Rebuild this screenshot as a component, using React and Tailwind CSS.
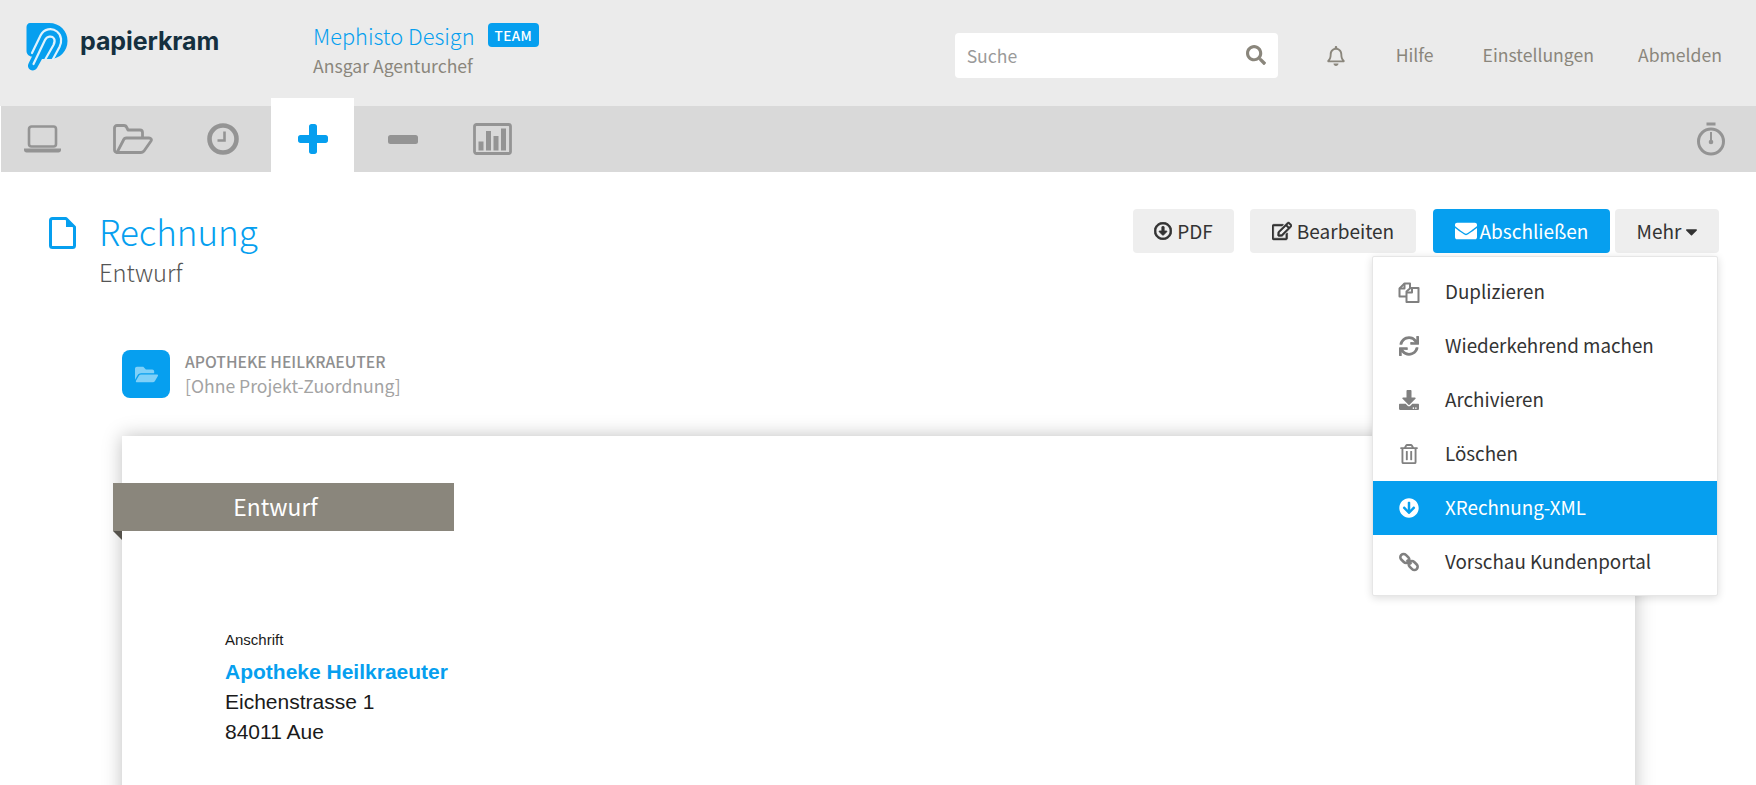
import React from "react";
import {
  FaRegBell, FaSearch, FaRegArrowAltCircleDown, FaRegEdit, FaEnvelope, FaCaretDown,
  FaSync, FaDownload, FaRegTrashAlt, FaArrowCircleDown, FaFolderOpen,
} from "react-icons/fa";

const Logo = () => (
  <svg width="42" height="48" viewBox="0 0 42 48" className="shrink-0">
    <path d="M4 0H23C34 0 41.500 8 41.500 18C41.500 28 34 36 24 36H16L11 45C9 48.500 4 48 2.500 45C1.500 43 2 41.500 3 39.500L6 33.500C3 33.500 .5 31 .5 28V4C.5 2 2 0 4 0Z" fill="#069fef" />
    <path d="M7.500 41L19 17C21 13 26 12.500 28 15.500C29.500 18 28.500 20 27.500 22L19.500 36" fill="none" stroke="#dff2fd" strokeWidth="2.200" strokeLinecap="round" />
    <path d="M6 30L14.500 12.500C18 5.500 26 4.500 31 8.500C36 12.500 36 19 33.500 24L27 36" fill="none" stroke="#dff2fd" strokeWidth="2.200" strokeLinecap="round" />
  </svg>
);

const Laptop = () => (
  <svg width="39" height="28" viewBox="0 0 39 28" fill="none">
    <rect x="6" y="1.500" width="27" height="20" rx="2.500" stroke="#949494" strokeWidth="2.600" />
    <path d="M1 23.500H38V25C38 26.500 37 27.500 35.500 27.500H3.500C2 27.500 1 26.500 1 25Z" fill="#949494" />
  </svg>
);

const FolderOpen = () => (
  <svg width="40" height="30" viewBox="0 0 40 30" fill="none" stroke="#949494" strokeWidth="2.800" strokeLinejoin="round">
    <path d="M4 28.500C2.500 28.500 1.500 27.500 1.500 26V4C1.500 2.500 2.500 1.500 4 1.500H11C12.500 1.500 13.500 2.500 14 4L15 6H27C28.500 6 29.500 7 29.500 8.500V13" />
    <path d="M4 28.500L10.500 16C11 14.500 12 14 13.500 14H36C38 14 39 15.500 38 17L31 27C30 28 29.500 28.500 28 28.500Z" />
  </svg>
);

const Clock = () => (
  <svg width="32" height="32" viewBox="0 0 32 32" fill="none">
    <circle cx="16" cy="16" r="13.500" stroke="#949494" strokeWidth="4.600" />
    <path d="M17.500 8.500V17.500H10.500" stroke="#949494" strokeWidth="2.600" />
  </svg>
);

const Chart = () => (
  <svg width="39" height="32" viewBox="0 0 39 32" fill="none">
    <rect x="1.500" y="1.500" width="36" height="29" rx="2" stroke="#949494" strokeWidth="2.800" />
    <rect x="5.500" y="18.500" width="5" height="9" fill="#949494" />
    <rect x="13" y="8" width="5" height="19.500" fill="#949494" />
    <rect x="20.500" y="13" width="5" height="14.500" fill="#949494" />
    <rect x="28" y="5.500" width="5" height="22" fill="#949494" />
  </svg>
);

const Stopwatch = () => (
  <svg width="30" height="34" viewBox="0 0 30 34" fill="none">
    <rect x="10.500" y="0.500" width="9" height="3" fill="#949494" />
    <circle cx="15" cy="19.500" r="12.500" stroke="#949494" strokeWidth="3" />
    <path d="M15 10V20" stroke="#949494" strokeWidth="2" />
    <circle cx="15" cy="20" r="2.300" fill="#949494" />
  </svg>
);

const Plus = () => (
  <svg width="30" height="30" viewBox="0 0 30 30">
    <path d="M11 2.500C11 1 12 0 13.500 0H16.500C18 0 19 1 19 2.500V11H27.500C29 11 30 12 30 13.500V16.500C30 18 29 19 27.500 19H19V27.500C19 29 18 30 16.500 30H13.500C12 30 11 29 11 27.500V19H2.500C1 19 0 18 0 16.500V13.500C0 12 1 11 2.500 11H11Z" fill="#069fef" />
  </svg>
);

const Minus = () => (
  <svg width="30" height="9" viewBox="0 0 30 9">
    <rect width="30" height="9" rx="2.500" fill="#949494" />
  </svg>
);

const FileOutline = () => (
  <svg width="27" height="32" viewBox="0 0 27 32" fill="none" className="mt-[8px] shrink-0">
    <path d="M3.500 1.500H17L25.500 10V28.500C25.500 29.800 24.800 30.500 23.500 30.500H3.500C2.200 30.500 1.500 29.800 1.500 28.500V3.500C1.500 2.200 2.200 1.500 3.500 1.500Z" stroke="#069fef" strokeWidth="3" strokeLinejoin="round" />
    <path d="M17 1.500V10H25.500Z" fill="#069fef" />
  </svg>
);

const Files = ({ className }) => (
  <svg viewBox="0 0 22 21" width="22" height="21" fill="none" stroke="currentColor" strokeWidth="2" strokeLinejoin="round" className={className}>
    <path d="M8 14.500H1.500V6.500L6.500 1.500H12V6" />
    <path d="M6.500 1.500V6.500H1.500" />
    <path d="M8.500 20V9.500L12.500 6H20.500V20Z" />
    <path d="M14 6V10.500H8.500" />
  </svg>
);

const Chain = ({ className }) => (
  <svg viewBox="0 0 20 20" width="20" height="20" fill="none" stroke="currentColor" strokeWidth="2.600" className={className}>
    <rect x="0.800" y="3.200" width="10" height="6.500" rx="3.200" transform="rotate(45 5.800 6.500)" />
    <rect x="9.200" y="10.300" width="10" height="6.500" rx="3.200" transform="rotate(45 14.200 13.500)" />
    <path d="M7.500 8L12.500 12" />
  </svg>
);

const menu = [
  { label: "Duplizieren", Icon: Files },
  { label: "Wiederkehrend machen", Icon: FaSync },
  { label: "Archivieren", Icon: FaDownload },
  { label: "Löschen", Icon: FaRegTrashAlt },
  { label: "XRechnung-XML", Icon: FaArrowCircleDown, active: true },
  { label: "Vorschau Kundenportal", Icon: Chain },
];

export default function App() {
  return (
    <div className="relative h-[785px] w-[1756px] overflow-hidden bg-white font-['Noto_Sans_CJK_SC','Noto_Sans',sans-serif] text-[#333]">
      {/* header */}
      <header className="flex h-[106px] items-center bg-[#ebebeb]">
        <div className="ml-[26px] flex w-[287px] items-center gap-[12px] self-start pt-[23px]">
          <Logo />
          <span className="-mt-[11px] font-['Inter',sans-serif] text-[25px] font-bold leading-none tracking-[-0.1px] text-[#15303f]">papierkram</span>
        </div>
        <div className="flex flex-col self-start pt-[21px]">
          <div className="flex items-start gap-[13px]">
            <span className="text-[21.800px] leading-[30px] font-light text-[#069fef]">Mephisto Design</span>
            <span className="mt-[2px] rounded-[4px] bg-[#069fef] px-[7px] text-[13.500px] leading-[24px] font-medium tracking-[0.4px] text-white">TEAM</span>
          </div>
          <span className="mt-[3px] text-[17.600px] leading-[24px] text-[#8a867c]">Ansgar Agenturchef</span>
        </div>
        <div className="ml-auto flex items-center pt-[5px]">
          <div className="relative h-[45px] w-[323px] rounded-[4px] bg-white">
            <input placeholder="Suche" className="h-full w-full bg-transparent pl-[12px] pr-[40px] text-[17.600px] outline-none placeholder:text-[#9a9a9a]" />
            <FaSearch className="absolute right-[12px] top-[12px] text-[20px] text-[#8a867c]" />
          </div>
          <FaRegBell className="ml-[48px] text-[20px] text-[#8a867c]" />
          <span className="ml-[50px] text-[17.600px] text-[#8a867c]">Hilfe</span>
          <span className="ml-[49px] text-[17.600px] text-[#8a867c]">Einstellungen</span>
          <span className="ml-[44px] mr-[34px] text-[17.600px] text-[#8a867c]">Abmelden</span>
        </div>
      </header>

      {/* tab bar */}
      <nav className="flex h-[66px] items-center gap-[7px] border-l border-white bg-[#d9d9d9]">
        <div className="flex h-[66px] w-[83px] items-center justify-center"><Laptop /></div>
        <div className="flex h-[66px] w-[83px] items-center justify-center"><FolderOpen /></div>
        <div className="flex h-[66px] w-[83px] items-center justify-center"><Clock /></div>
        <div className="-mt-[8px] flex h-[74px] w-[83px] items-center justify-center bg-white pt-[8px]"><Plus /></div>
        <div className="flex h-[66px] w-[83px] items-center justify-center"><Minus /></div>
        <div className="flex h-[66px] w-[83px] items-center justify-center"><Chart /></div>
        <div className="ml-auto mr-[30px] flex items-center"><Stopwatch /></div>
      </nav>

      {/* title row */}
      <div className="flex items-start justify-between pt-[37px] pr-[37px] pl-[49px]">
        <div className="flex items-start gap-[23px]">
          <FileOutline />
          <div className="flex flex-col">
            <h1 className="text-[35px] leading-[44px] font-light text-[#069fef]">Rechnung</h1>
            <span className="mt-[3px] text-[23.700px] leading-[32px] font-light text-[#555]">Entwurf</span>
          </div>
        </div>
        <div className="flex items-center">
          <button className="flex h-[44px] w-[101px] items-center justify-center gap-[5px] rounded-[4px] bg-[#eeeeee] text-[19px] text-[#333]"><FaRegArrowAltCircleDown stroke="currentColor" strokeWidth={24} className="text-[18px]" />PDF</button>
          <button className="ml-[16px] flex h-[44px] w-[166px] items-center justify-center gap-[5px] rounded-[4px] bg-[#eeeeee] text-[19px] text-[#333]"><FaRegEdit stroke="currentColor" strokeWidth={16} className="text-[20px]" />Bearbeiten</button>
          <button className="ml-[17px] flex h-[44px] w-[177px] items-center justify-center gap-[3px] rounded-[4px] bg-[#069fef] text-[19px] text-white"><FaEnvelope className="text-[22px]" />Abschließen</button>
          <button className="ml-[5px] flex h-[44px] w-[104px] items-center justify-center gap-[1px] rounded-[4px] bg-[#eeeeee] pl-[4px] text-[19px] text-[#333]">Mehr<FaCaretDown className="text-[19px]" /></button>
        </div>
      </div>

      {/* project line */}
      <div className="mt-[62px] ml-[122px] flex items-center gap-[15px]">
        <div className="flex h-[48px] w-[48px] items-center justify-center rounded-[8px] bg-[#069fef]">
          <FaFolderOpen className="text-[23px] text-[#7fd0f8]" />
        </div>
        <div className="flex flex-col">
          <span className="text-[15.700px] leading-[24px] font-medium text-[#8f8f8f]">APOTHEKE HEILKRAEUTER</span>
          <span className="text-[17.600px] leading-[24px] text-[#a3a3a3]">[Ohne Projekt-Zuordnung]</span>
        </div>
      </div>

      {/* paper */}
      <div className="mt-[38px] ml-[122px] h-[400px] w-[1513px] bg-white pt-[47px] shadow-[0_0_18px_rgba(0,0,0,0.25)]">
        <div className="relative -ml-[9px] flex h-[48px] w-[341px] items-center justify-center bg-[#8a867c] pr-[16px] text-[22.800px] text-white">
          Entwurf
          <svg width="9" height="9" viewBox="0 0 9 9" className="absolute top-[48px] left-0"><path d="M0 0H9V9Z" fill="#55524b" /></svg>
        </div>
        <div className="mt-[100px] ml-[103px] font-['Liberation_Sans',sans-serif] text-[21px] leading-[30px] text-[#1a1a1a]">
          <div className="text-[15px] leading-[18px]">Anschrift</div>
          <div className="mt-[8px] font-bold text-[#069fef]">Apotheke Heilkraeuter</div>
          <div>Eichenstrasse 1</div>
          <div>84011 Aue</div>
        </div>
      </div>

      {/* dropdown */}
      <div className="absolute top-[256px] left-[1372px] w-[346px] rounded-[2px] border border-[#e6e6e6] bg-white pt-[8px] pb-[6px] shadow-[0_2px_8px_rgba(0,0,0,0.14)]">
        {menu.map(({ label, Icon, active }) => (
          <div key={label} className={active ? "flex h-[54px] items-center bg-[#069fef] text-[18.800px] text-white" : "flex h-[54px] items-center text-[18.800px] text-[#333]"}>
            <span className="flex w-[72px] justify-center">
              <Icon className={active ? "text-[20px] text-white" : "text-[20px] text-[#808080]"} />
            </span>
            <span className="-mt-[2px]">{label}</span>
          </div>
        ))}
      </div>
    </div>
  );
}
